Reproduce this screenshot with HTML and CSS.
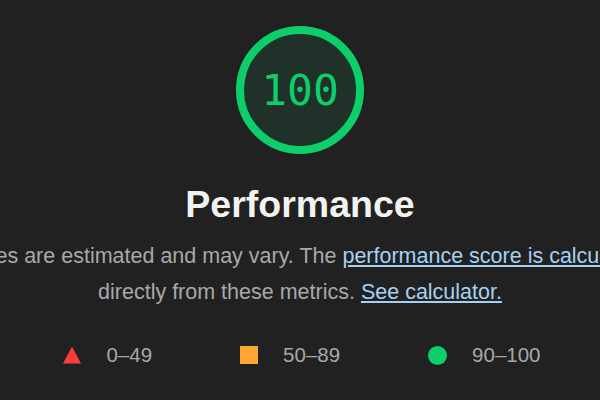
FILE: index.html
```html
<!DOCTYPE html>
<html>
<head>
<meta charset="utf-8">
<link rel="stylesheet" href="styles.css">
</head>
<body>
<main class="page">
  <div class="gauge">
    <svg class="gauge-ring" width="128" height="128" viewBox="0 0 128 128">
      <circle cx="64" cy="64" r="60" fill="rgba(12,206,107,0.09)" stroke="#0cce6b" stroke-width="8"/>
    </svg>
    <span class="gauge-score">100</span>
  </div>
  <h1 class="title">Performance</h1>
  <div class="desc-wrap">
    <p class="desc">Values are estimated and may vary. The <a href="#">performance score is calculated</a><br>directly from these metrics. <a href="#">See calculator.</a></p>
  </div>
  <div class="legend">
    <div class="legend-item">
      <svg width="18" height="18" viewBox="0 0 18 18"><polygon points="9,0.5 18,17.5 0,17.5" fill="#ff3b3b"/></svg>
      <span>0–49</span>
    </div>
    <div class="legend-item">
      <svg width="18" height="18" viewBox="0 0 18 18"><rect x="0" y="0" width="18" height="18" fill="#ffa733"/></svg>
      <span>50–89</span>
    </div>
    <div class="legend-item">
      <svg width="19" height="19" viewBox="0 0 19 19"><circle cx="9.5" cy="9.5" r="9.5" fill="#0cce6b"/></svg>
      <span>90–100</span>
    </div>
  </div>
</main>
</body>
</html>
```
FILE: styles.css
```css
html, body {
  margin: 0;
  padding: 0;
  background: #212121;
}
body {
  width: 600px;
  height: 400px;
  overflow: hidden;
  font-family: "Liberation Sans", Arial, sans-serif;
}
.page {
  display: flex;
  flex-direction: column;
  align-items: center;
}
.gauge {
  position: relative;
  width: 128px;
  height: 128px;
  margin-top: 26px;
}
.gauge-ring {
  display: block;
}
.gauge-score {
  position: absolute;
  inset: 0;
  display: flex;
  align-items: center;
  justify-content: center;
  font-family: "DejaVu Sans Mono", monospace;
  font-variant-numeric: slashed-zero;
  font-feature-settings: "zero" 1;
  font-size: 43px;
  color: #0cce6b;
}
.title {
  margin: 28px 0 0;
  font-size: 37.5px;
  line-height: 44px;
  font-weight: bold;
  color: #f2f2f2;
}
.desc-wrap {
  width: 600px;
  display: flex;
  justify-content: center;
  margin-top: 12px;
}
.desc {
  flex: none;
  width: 900px;
  margin: 0;
  text-align: center;
  white-space: nowrap;
  font-size: 21.5px;
  line-height: 36px;
  color: #a8a8a8;
}
.desc a {
  color: #a6d1f3;
  text-decoration: underline;
}
.legend {
  display: flex;
  gap: 88px;
  margin-top: 33px;
  margin-left: 4px;
}
.legend-item {
  display: flex;
  align-items: center;
  gap: 25px;
  font-size: 20.5px;
  color: #a8a8a8;
}
.legend-item svg {
  display: block;
}
```
